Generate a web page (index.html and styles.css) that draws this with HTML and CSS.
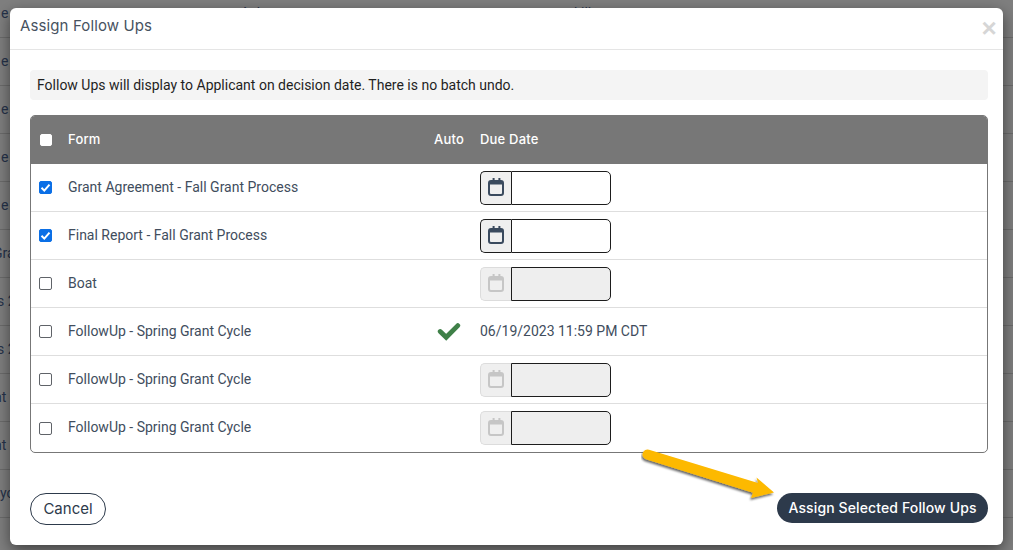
FILE: index.html
```html
<!DOCTYPE html>
<html lang="en">
<head>
<meta charset="utf-8">
<title>Assign Follow Ups</title>
<link rel="stylesheet" href="styles.css">
</head>
<body>
<svg class="defs" width="0" height="0" aria-hidden="true">
  <symbol id="cal" viewBox="0 0 16 18">
    <rect x="1" y="3" width="14" height="14" rx="2" fill="none" stroke="currentColor" stroke-width="2"/>
    <rect x="1" y="3" width="14" height="3.500" fill="currentColor"/>
    <rect x="4.600" y="0" width="2" height="4" fill="currentColor"/>
    <rect x="10.400" y="0" width="2" height="4" fill="currentColor"/>
  </symbol>
</svg>
<div class="backdrop">
  <div class="bgrow top-row"><span class="edge e">e</span><span class="peek first">Ask</span><span class="peek second">kill</span></div>
  <div class="bgrow"><span class="edge e">e</span></div>
  <div class="bgrow"><span class="edge e">e</span></div>
  <div class="bgrow"><span class="edge e">e</span></div>
  <div class="bgrow"><span class="edge e">e</span></div>
  <div class="bgrow"><span class="edge gr">Grant</span></div>
  <div class="bgrow"><span class="edge s2">s 2023</span></div>
  <div class="bgrow"><span class="edge s2">s 2023</span></div>
  <div class="bgrow"><span class="edge nt">nt</span></div>
  <div class="bgrow"><span class="edge nt">nt</span></div>
  <div class="bgrow"><span class="edge yc">ycle</span></div>
</div>
<div class="modal" role="dialog">
  <header class="modal-head">
    <h1 class="modal-title">Assign Follow Ups</h1>
    <span class="close">&times;</span>
  </header>
  <div class="modal-body">
    <p class="notice">Follow Ups will display to Applicant on decision date. There is no batch undo.</p>
    <div class="table">
      <div class="row head">
        <span class="cell-check"><span class="box white"></span></span>
        <span class="cell-form">Form</span>
        <span class="cell-auto">Auto</span>
        <span class="cell-date">Due Date</span>
      </div>
      <div class="row">
        <span class="cell-check"><span class="box checked"><svg viewBox="0 0 13 13" width="13" height="13"><path d="M2.500 6.800l2.800 2.800 5.200-6" fill="none" stroke="#fff" stroke-width="2"/></svg></span></span>
        <span class="cell-form">Grant Agreement - Fall Grant Process</span>
        <span class="cell-auto"></span>
        <span class="cell-date"><span class="date-input"><span class="addon"><svg width="16" height="18"><use href="#cal"/></svg></span><span class="field"></span></span></span>
      </div>
      <div class="row">
        <span class="cell-check"><span class="box checked"><svg viewBox="0 0 13 13" width="13" height="13"><path d="M2.500 6.800l2.800 2.800 5.200-6" fill="none" stroke="#fff" stroke-width="2"/></svg></span></span>
        <span class="cell-form">Final Report - Fall Grant Process</span>
        <span class="cell-auto"></span>
        <span class="cell-date"><span class="date-input"><span class="addon"><svg width="16" height="18"><use href="#cal"/></svg></span><span class="field"></span></span></span>
      </div>
      <div class="row">
        <span class="cell-check"><span class="box"></span></span>
        <span class="cell-form">Boat</span>
        <span class="cell-auto"></span>
        <span class="cell-date"><span class="date-input off"><span class="addon"><svg width="16" height="18"><use href="#cal"/></svg></span><span class="field"></span></span></span>
      </div>
      <div class="row">
        <span class="cell-check"><span class="box"></span></span>
        <span class="cell-form">FollowUp - Spring Grant Cycle</span>
        <span class="cell-auto"><svg class="tick" viewBox="0 0 24 20" width="24" height="20"><path d="M3.200 9.500l6 5.800L20.800 3.600" fill="none" stroke="#3f8048" stroke-width="4.800" stroke-linecap="round"/></svg></span>
        <span class="cell-date"><span class="date-text">06/19/2023 11:59 PM CDT</span></span>
      </div>
      <div class="row">
        <span class="cell-check"><span class="box"></span></span>
        <span class="cell-form">FollowUp - Spring Grant Cycle</span>
        <span class="cell-auto"></span>
        <span class="cell-date"><span class="date-input off"><span class="addon"><svg width="16" height="18"><use href="#cal"/></svg></span><span class="field"></span></span></span>
      </div>
      <div class="row">
        <span class="cell-check"><span class="box"></span></span>
        <span class="cell-form">FollowUp - Spring Grant Cycle</span>
        <span class="cell-auto"></span>
        <span class="cell-date"><span class="date-input off"><span class="addon"><svg width="16" height="18"><use href="#cal"/></svg></span><span class="field"></span></span></span>
      </div>
    </div>
    <div class="actions">
      <button class="btn cancel" type="button">Cancel</button>
      <button class="btn assign" type="button">Assign Selected Follow Ups</button>
    </div>
  </div>
</div>
<svg class="arrow" viewBox="0 0 140 56" width="140" height="56" aria-hidden="true">
  <defs><filter id="sh" x="-10%" y="-30%" width="120%" height="160%"><feDropShadow dx="-1" dy="2" stdDeviation="1.200" flood-color="#000" flood-opacity=".6"/></filter></defs>
  <path d="M8 1.800L117 35L115.500 29.500L133 44.500L110 50L112 44.800L5 11.200A4.800 4.800 0 0 1 8 1.800z" fill="#fdb900" filter="url(#sh)"/>
</svg>
</body>
</html>
```
FILE: styles.css
```css
* { box-sizing: border-box; }
html, body { margin: 0; padding: 0; height: 100%; overflow: hidden; }
body { background: #7f7f7f; font-family: Roboto, "Liberation Sans", sans-serif; font-size: 14px; color: #414d5d; position: relative; }
.defs { position: absolute; }
.backdrop { height: 560px; overflow: hidden; margin-top: -10px; }
.bgrow { height: 48px; border-bottom: 1px solid #6c6c6c; line-height: 47px; color: #26324a; font-size: 14px; white-space: nowrap; display: flex; }
.edge { display: block; }
.e { margin-left: 1px; }
.gr { margin-left: -7px; }
.s2 { margin-left: -3px; }
.nt { margin-left: -6px; }
.yc { margin-left: 0; }
.peek { display: block; }
.first { margin-left: 232px; }
.second { margin-left: 310px; }
.modal { position: absolute; left: 10px; top: 8px; width: 993px; height: 537px; background: #fff; border-radius: 6px; box-shadow: 0 5px 15px rgba(0,0,0,.5); display: flex; flex-direction: column; }
.modal-head { height: 42px; border-bottom: 1px solid #e5e5e5; display: flex; align-items: center; justify-content: space-between; padding: 0 5px 0 10px; flex: none; }
.modal-title { margin: 0; font: 400 15px/20px Inter, "Open Sans", sans-serif; letter-spacing: .12px; color: #47525f; position: relative; top: -3px; }
.close { font: 700 26px/20px "Liberation Sans", sans-serif; color: #d6d6d6; width: 18px; text-align: center; position: relative; top: -1px; }
.modal-body { flex: 1; padding: 20px 15px 20px 20px; display: flex; flex-direction: column; }
.notice { margin: 0 0 15px; height: 30px; background: #f4f4f4; border-radius: 4px; padding: 0 7px; font-size: 14px; line-height: 30px; color: #1f1f1f; }
.table { border: 1px solid #777; border-radius: 5px; height: 338px; overflow: hidden; flex: none; }
.row { display: flex; align-items: center; height: 48px; border-bottom: 1px solid #dedede; }
.row:last-child { border-bottom: 0; }
.row.head { background: #777; color: #fff; border-bottom: 0; font: 500 13px Inter, "Open Sans", sans-serif; letter-spacing: .2px; }
.head .cell-form, .head .cell-auto, .head .cell-date { padding-bottom: 2px; }
.cell-check { width: 30px; padding-left: 8px; display: flex; flex: none; }
.cell-form { width: 361px; padding-left: 7px; flex: none; padding-bottom: 2px; }
.cell-auto { width: 58px; flex: none; padding-left: 15px; display: flex; }
.head .cell-auto { padding-left: 12px; }
.cell-date { flex: 1; display: flex; }
.date-text { padding-bottom: 2px; }
.box { width: 13px; height: 13px; border: 1px solid #5f6368; border-radius: 2px; background: #fff; display: block; line-height: 0; }
.box.white { width: 12px; height: 12px; margin: -1px 0 0 1px; border-color: #fff; }
.box.checked { background: #0b6fe6; border-color: #0b6fe6; }
.box svg { margin: -1px; }
.date-input { display: flex; width: 131px; height: 34px; }
.addon { width: 31px; background: #efefef; border: 1px solid #1d1d1d; border-right: 0; border-radius: 5px 0 0 5px; display: flex; align-items: center; justify-content: center; color: #3a4a5e; padding-bottom: 2px; }
.field { flex: 1; border: 1px solid #1d1d1d; border-radius: 0 5px 5px 0; background: #fff; }
.off .addon { border-color: #dcdcdc; color: #c6c6c6; }
.off .field { background: #eee; }
.actions { display: flex; justify-content: space-between; align-items: flex-start; margin-top: 40px; }
.btn { font: 500 14px Inter, "Open Sans", sans-serif; border-radius: 16px; }
.cancel { width: 76px; height: 32px; background: #fff; border: 1px solid #2d3a4b; color: #2d3a4b; font-weight: 400; font-size: 15px; padding: 0 0 2px; }
.assign { width: 211px; height: 30px; background: #2d3a4b; border: 0; color: #fff; padding: 0 0 2px; letter-spacing: .12px; }
.arrow { position: absolute; left: 641px; top: 448px; }
```
